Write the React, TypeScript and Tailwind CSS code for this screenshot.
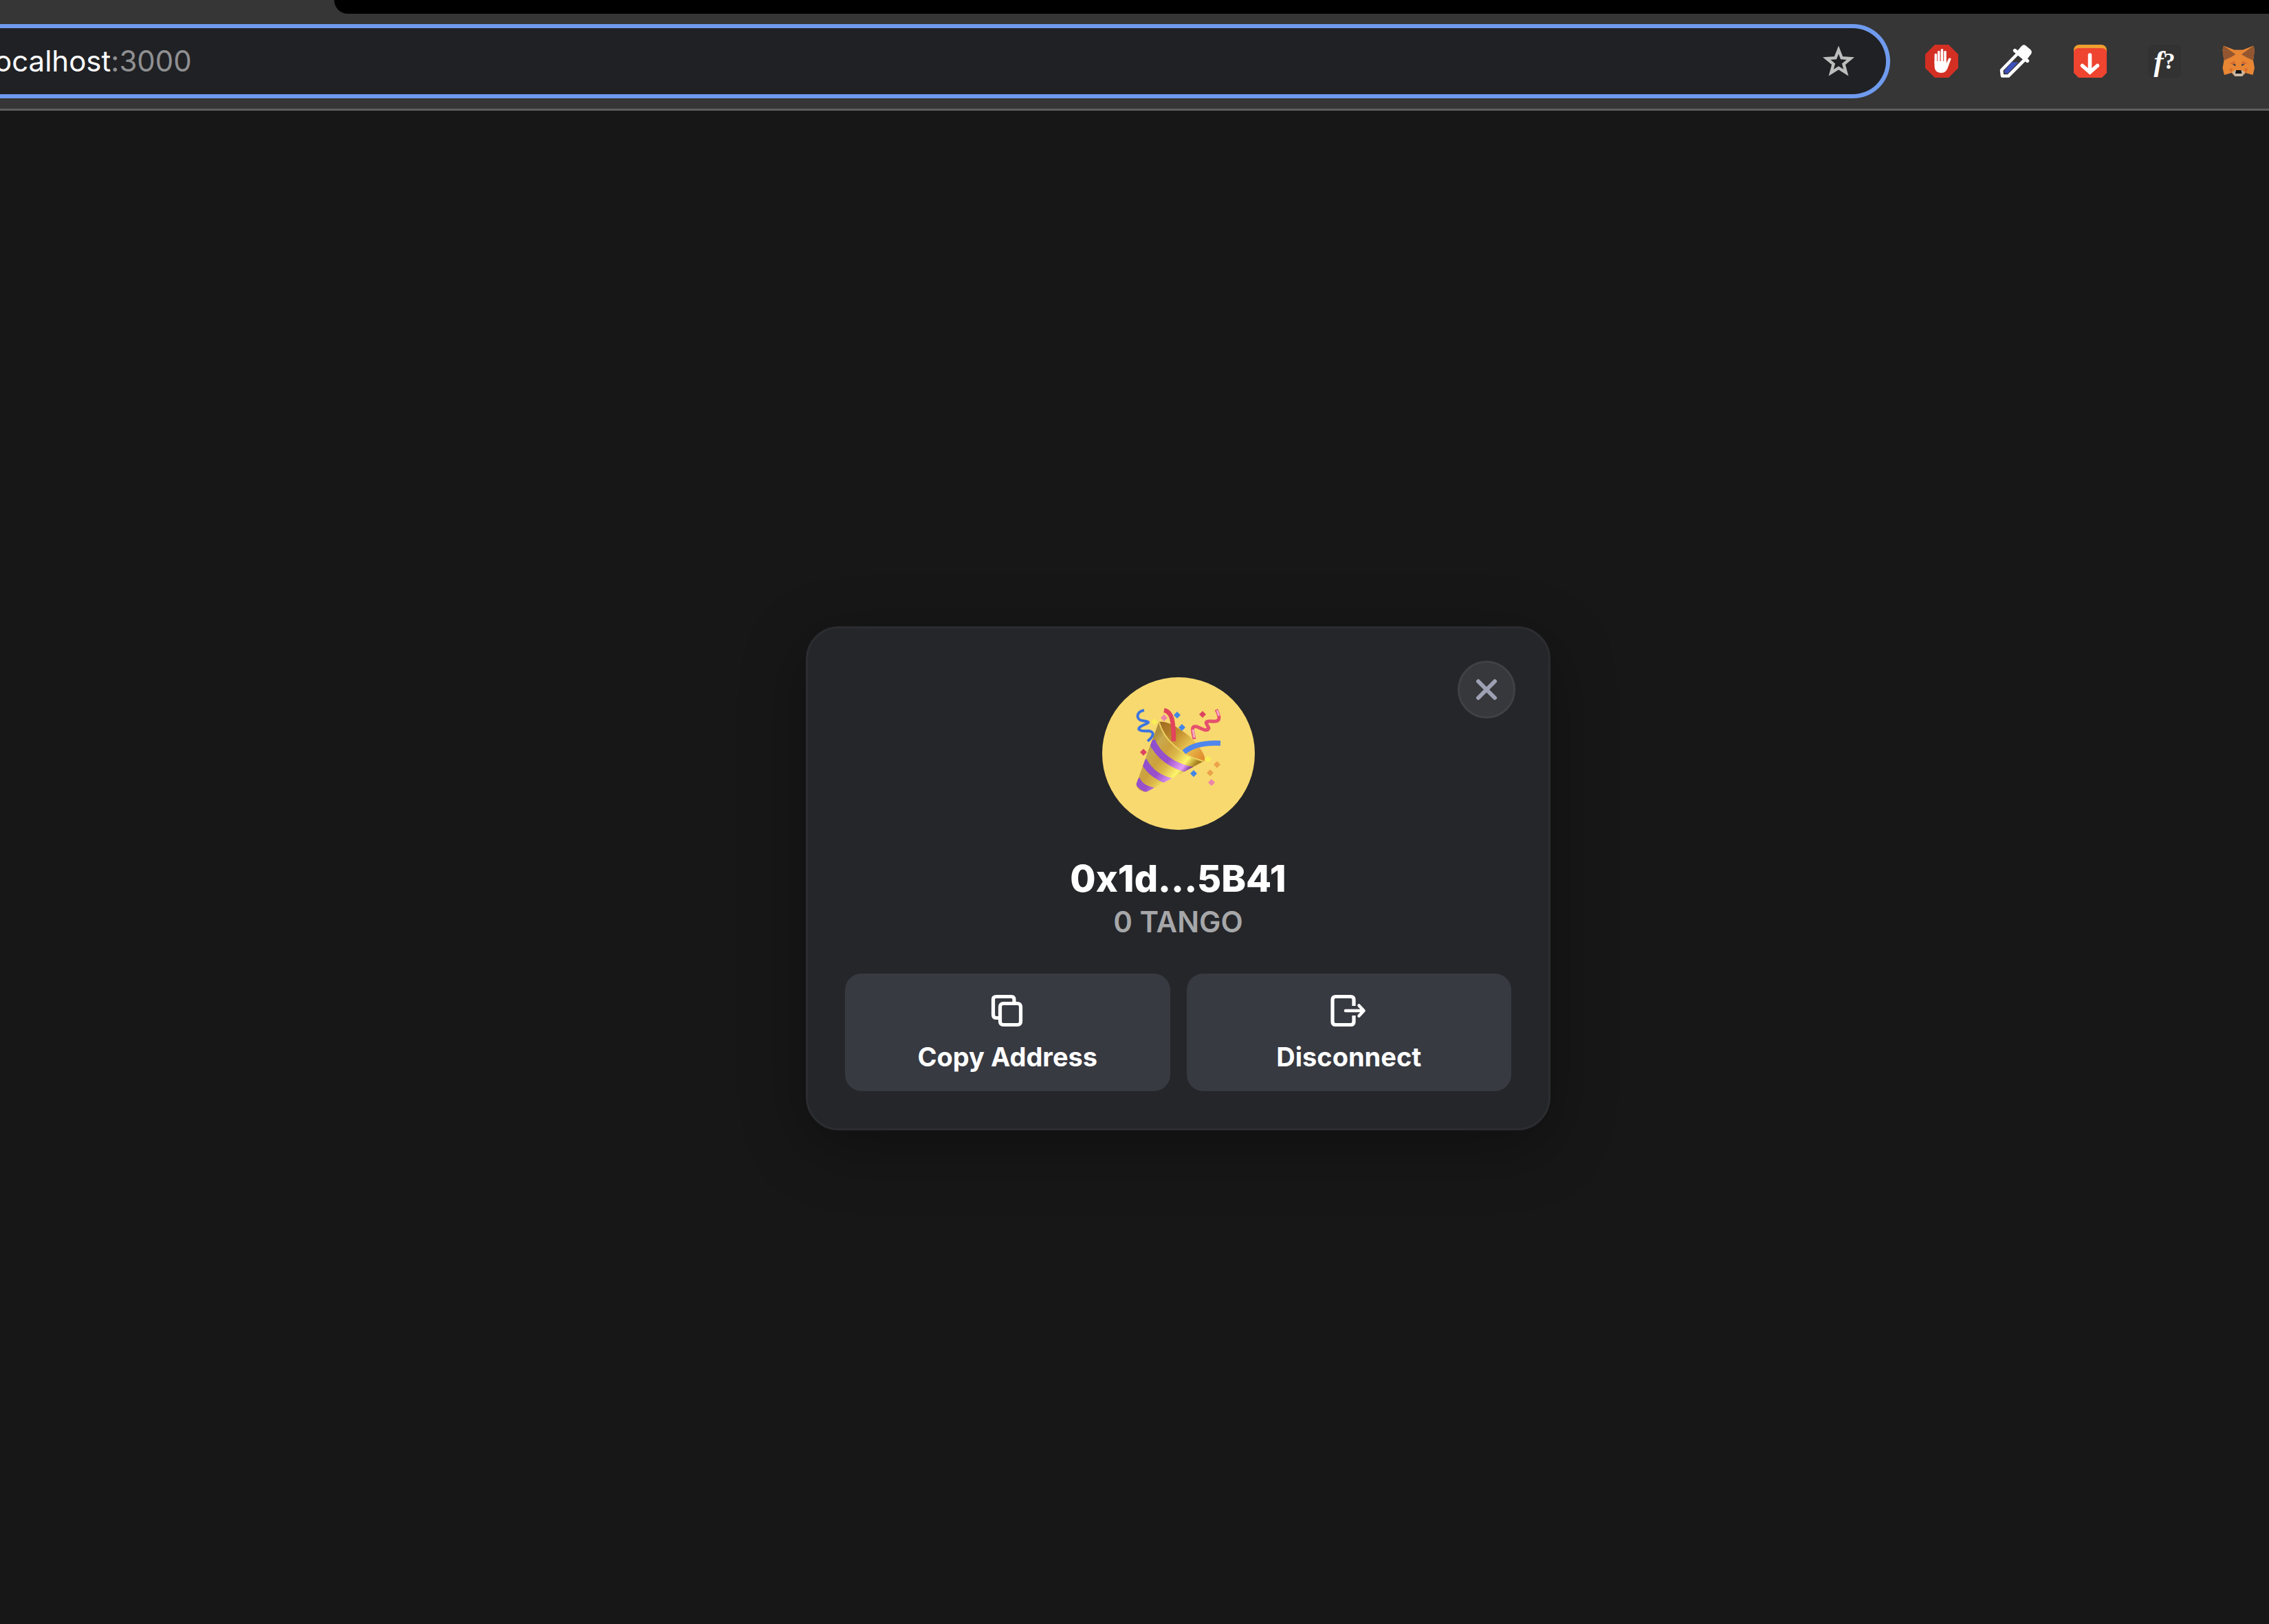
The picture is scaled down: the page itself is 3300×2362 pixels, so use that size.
import React from "react";

const font = "font-['Inter',sans-serif]";

function Star() {
  return (
    <svg viewBox="0 0 46 44" className="h-11 w-[46px]" fill="none" stroke="#bdbdbd" strokeWidth="4.4">
      <path d="M23 5.5 27.6 17.2 40.3 18 30.4 26.2 33.8 38.6 23 31.8 12.2 38.6 15.6 26.2 5.7 18 18.4 17.2Z" />
    </svg>
  );
}

function BlockHand() {
  return (
    <svg viewBox="0 0 48 48" className="size-12">
      <path d="M14 0H34L48 14V34L34 48H14L0 34V14Z" fill="#d32f23" />
      <g stroke="#fff" strokeWidth="3.6" strokeLinecap="round" fill="none">
        <path d="M15.3 14.5V27M19.7 10.5V26M24.4 7.7V26M29 10.5V26" />
      </g>
      <path d="M13.5 24H30.8V27.5L33.6 20.8C34.4 19.2 36.6 19.2 37.7 20.2L33.2 32.5C31.4 38 28.6 41 23.4 41 17 41 13.5 37.5 13.5 31Z" fill="#fff" />
    </svg>
  );
}

function Dropper() {
  return (
    <svg viewBox="0 0 48 48" className="size-12">
      <path d="M26 13.500 3 37 4 45.500 13 45.500 37 21.500" fill="#363636" stroke="#fff" strokeWidth="4.600" strokeLinejoin="round" />
      <path d="M17.500 25.500H27.500L13 41C9.500 43.500 6 41 7.500 37.500Z" fill="#3d4fb8" />
      <path d="M22.500 8.500 40.500 23.500" stroke="#fff" strokeWidth="5.400" strokeLinecap="round" />
      <path d="M24.500 11 32 2Q35 -1 38.500 1.500L45.500 7.500Q48 10.500 46 13.500L38 24Z" fill="#fff" />
    </svg>
  );
}

function DownloadBadge() {
  return (
    <svg viewBox="0 0 48 48" className="size-12">
      <rect width="48" height="30" rx="8" fill="#f0a030" />
      <path d="M0 12Q0 5 7 5H41Q48 5 48 12V41L41 48H7L0 41Z" fill="#ee4430" />
      <path d="M23.500 15V39M12.500 30.500 23.500 40 34.500 30.500" fill="none" stroke="#fff" strokeWidth="5.500" strokeLinecap="round" />
    </svg>
  );
}

function Fox() {
  return (
    <svg viewBox="0 0 48 48" className="size-12">
      <path d="M2 1.500 17.500 7.500H30L45.500 1.500 47 8 45 23 47 34 44.500 44 34 41 29 46H18.500L13.500 41 3 44 .5 34 2.500 23 .5 8Z" fill="#e88634" />
      <path d="M2 1.500 19.500 14 13 18 2.500 23 .5 8ZM45.500 1.500 28 14 34.500 18 45 23 47 8Z" fill="#935630" />
      <path d="M10.500 27.500 18 23.500 19.500 29ZM37 27.500 29.500 23.500 28 29ZM10 35 15 34 13.500 41ZM37.500 35 32.500 34 34 41Z" fill="#d66b32" />
      <path d="M14.500 28 19.500 28.500 19 31.500ZM33 28 28 28.500 28.500 31.500Z" fill="#2f3c48" />
      <path d="M14.500 40 19.500 37H28L33 40 29 46H18.500Z" fill="#c9b8a8" />
      <path d="M20 37H27.500L28.500 42H19Z" fill="#161616" />
    </svg>
  );
}

function Popper() {
  return (
    <svg viewBox="0 0 222 222" className="size-[222px]">
      <defs>
        <linearGradient id="cone" x1="62" y1="106" x2="118" y2="150" gradientUnits="userSpaceOnUse">
          <stop offset="0" stopColor="#b2913c" />
          <stop offset=".12" stopColor="#c8a94e" />
          <stop offset=".35" stopColor="#cda03c" />
          <stop offset=".55" stopColor="#dcb94a" />
          <stop offset=".8" stopColor="#fdf56c" />
          <stop offset="1" stopColor="#a9801f" />
        </linearGradient>
        <linearGradient id="band" x1="62" y1="106" x2="118" y2="150" gradientUnits="userSpaceOnUse">
          <stop offset="0" stopColor="#8d50cf" />
          <stop offset=".5" stopColor="#9a4fc9" />
          <stop offset=".82" stopColor="#e79ff5" />
          <stop offset="1" stopColor="#64208c" />
        </linearGradient>
        <linearGradient id="mouth" x1="84" y1="66" x2="146" y2="120" gradientUnits="userSpaceOnUse">
          <stop offset="0" stopColor="#9d6a22" />
          <stop offset=".35" stopColor="#c08a2c" />
          <stop offset=".65" stopColor="#e9c350" />
          <stop offset="1" stopColor="#e08a2c" />
        </linearGradient>
        <clipPath id="coneClip">
          <path d="M82 66C88 88 112 114 148 122L66 166C58 169 48 161 50 154Z" />
        </clipPath>
      </defs>
      <path d="M82 66C90 61 112 73 129 88C145 104 152 117 148 122C136 124 86 92 82 66Z" fill="url(#mouth)" />
      <path d="M82 66C88 88 112 114 148 122L66 166C58 169 48 161 50 154Z" fill="url(#cone)" />
      <g clipPath="url(#coneClip)" fill="none" stroke="url(#band)" strokeWidth="10">
        <path d="M72 92C80 112 100 130 134 136" />
        <path d="M60 121C68 137 84 149 106 153" />
        <path d="M50 148C54 158 63 164 78 166" />
      </g>
      <path d="M83 66C89 88 113 114 147 122" fill="none" stroke="#ecd060" strokeWidth="2" />
      <path d="M90 48C101 50 104 62 104 93" fill="none" stroke="#e2445c" strokeWidth="6.500" />
      <path d="M119 109C132 98 150 95 172 96" fill="none" stroke="#4f86ee" strokeWidth="7.500" />
      <path d="M61 48C50 50 48 61 58 63C68 65 72 65 59 70C47 76 56 79 67 78C77 79 75 86 66 93" fill="none" stroke="#3d74e0" strokeWidth="4" />
      <path d="M166 47C174 63 169 65 159 64C145 63 154 70 155 74C153 80 145 75 138 72C129 70 131 76 134 90" fill="none" stroke="#e5506e" strokeWidth="5" />
      <path d="M132 76 134 88M167 48 170 56" stroke="#f3a9c4" strokeWidth="3" />
      <g>
        <path d="m109 50 5 5-5 5-5-5ZM116 68l5 5-5 5-5-5ZM133 135l5 5-5 5-5-5Z" fill="#4186e8" />
        <path d="m146 49 5 5-5 5-5-5ZM60 104l5 5-5 5-5-5Z" fill="#dc4460" />
        <path d="m90 54 5 5-5 5-5-5ZM159 148l5 5-5 5-5-5Z" fill="#ec86a8" />
        <path d="m76 60 5 5-5 5-5-5ZM154 114l5 5-5 5-5-5Z" fill="#f9ee55" />
        <path d="m167 122 5 5-5 5-5-5ZM157 134l5 5-5 5-5-5Z" fill="#eca24c" />
      </g>
    </svg>
  );
}

function CopyIcon() {
  return (
    <svg viewBox="0 0 48 48" className="size-12" fill="none" stroke="#fff" strokeWidth="5.2">
      <rect x="13.5" y="13.5" width="30" height="31" rx="4.5" />
      <path d="M13 34.5H8Q3.500 34.500 3.500 30V7.500Q3.500 3.500 8 3.500H30Q34 3.500 34 8V13" />
    </svg>
  );
}

function ExitIcon() {
  return (
    <svg viewBox="2 0 54 48" className="h-12 w-[54px]" fill="none" stroke="#fff" strokeWidth="5.2">
      <path d="M36 17V8Q36 3.500 31.500 3.500H9.500Q5 3.500 5 8V40Q5 44.500 9.500 44.500H31.500Q36 44.500 36 40V31" />
      <path d="M24 24H50M43.500 16.500 50.500 24 43.500 31.500" strokeWidth="4.600" strokeLinecap="round" strokeLinejoin="round" />
    </svg>
  );
}

function Action({ icon, label }: { icon: React.ReactNode; label: string }) {
  return (
    <button type="button" className="flex flex-1 flex-col items-center rounded-3xl bg-[#383a42] pt-[30px] pb-5 text-[38px] leading-[60px] font-bold text-white">
      {icon}
      <span className="mt-[13px]">{label}</span>
    </button>
  );
}

export default function App() {
  return (
    <div className={`flex min-h-screen flex-col overflow-hidden bg-[#171717] ${font}`}>
      <header className="border-b-[3px] border-[#5e5e5e] bg-[#363636]">
        <div className="flex h-5">
          <div className="w-[486px]" />
          <div className="flex-1 rounded-bl-[32px] bg-black" />
        </div>
        <div className="flex items-center py-[15px]">
          <div className="flex h-[108px] flex-1 items-center justify-between rounded-r-full border-y-[6px] border-r-[6px] border-[#6f9bee] bg-[#202124] pr-[46px]">
            <a href="#" className="-ml-2 text-[42px] leading-[60px] text-white">
              ocalhost<span className="text-[#8f9092]">:3000</span>
            </a>
            <button type="button" aria-label="Bookmark"><Star /></button>
          </div>
          <nav aria-label="Extensions" className="flex items-center gap-[60px] pr-5 pl-[51px]">
            <button type="button" aria-label="Ad blocker"><BlockHand /></button>
            <button type="button" aria-label="Color picker"><Dropper /></button>
            <button type="button" aria-label="Downloader"><DownloadBadge /></button>
            <button type="button" aria-label="Font finder" className="flex size-12 items-center justify-center rounded-md bg-[#323232] font-['Liberation_Serif',serif] text-[42px] leading-[48px] font-bold text-white">
              <i>f</i>
              <span className="text-[34px]">?</span>
            </button>
            <button type="button" aria-label="Wallet"><Fox /></button>
          </nav>
        </div>
      </header>
      <main className="flex flex-1 items-center justify-center pt-8 pl-[127px]">
        <section role="dialog" aria-label="Account" className="relative flex w-full max-w-[1083px] flex-col items-center rounded-[48px] border-[3px] border-[#2c2d31] bg-[#25262a] px-[54px] pt-[71px] pb-[54px] shadow-[0_24px_96px_rgba(0,0,0,0.32)]">
          <button type="button" aria-label="Close" className="absolute top-[47px] right-12 flex size-[84px] items-center justify-center rounded-full border-[3px] border-[#404144] bg-[#37383b]">
            <svg viewBox="0 0 32 32" className="size-8" stroke="#9ea1b3" strokeWidth="6" strokeLinecap="round">
              <path d="M4 4 28 28M28 4 4 28" />
            </svg>
          </button>
          <div className="rounded-full bg-[#f8d96f]"><Popper /></div>
          <h1 className="mt-[38px] text-[54px] leading-[66px] font-extrabold text-white">0x1d...5B41</h1>
          <p className="text-[42px] leading-[60px] font-semibold text-[#a6a7a9]">0 TANGO</p>
          <div className="mt-[45px] flex w-full gap-6">
            <Action icon={<CopyIcon />} label="Copy Address" />
            <Action icon={<ExitIcon />} label="Disconnect" />
          </div>
        </section>
      </main>
    </div>
  );
}
